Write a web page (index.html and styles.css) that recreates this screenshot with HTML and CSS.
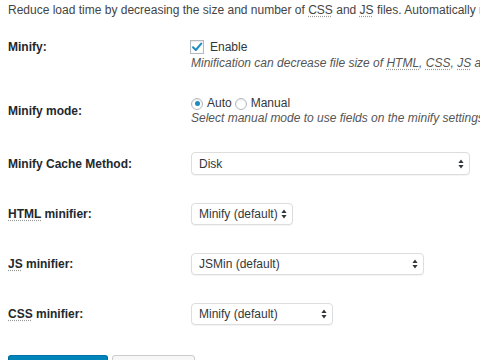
FILE: index.html
```html
<!DOCTYPE html>
<html>
<head>
<meta charset="utf-8">
<link rel="stylesheet" href="styles.css">
</head>
<body>
<div class="page">
  <p class="intro">Reduce load time by decreasing the size and number of <abbr>CSS</abbr> and <abbr>JS</abbr> files. Automatically remove unnecessary data from files.</p>

  <div class="row row-minify">
    <div class="label">Minify:</div>
    <div class="control">
      <div class="line">
        <span class="checkbox"><svg width="12" height="12" viewBox="0 0 12 12"><path d="M2 6.2 L4.8 9 L10.2 2.6" fill="none" stroke="#1e8cbe" stroke-width="2" stroke-linecap="round" stroke-linejoin="round"/></svg></span>
        <span class="opt">Enable</span>
      </div>
      <div class="desc">Minification can decrease file size of <abbr>HTML</abbr>, <abbr>CSS</abbr>, <abbr>JS</abbr> and feeds respectively by ~10% on average.</div>
    </div>
  </div>

  <div class="row row-mode">
    <div class="label">Minify mode:</div>
    <div class="control">
      <div class="line line-tight">
        <span class="radio checked"></span><span class="opt">Auto</span>
        <span class="radio"></span><span class="opt">Manual</span>
      </div>
      <div class="desc desc-tight">Select manual mode to use fields on the minify settings tab to specify files to be minified.</div>
    </div>
  </div>

  <div class="row row-cache">
    <div class="label">Minify Cache Method:</div>
    <div class="control">
      <div class="select sel-cache"><span>Disk</span><svg class="arrows" width="6" height="10" viewBox="0 0 6 10"><path d="M3 0.5 L5.6 4 L0.4 4 Z M3 9.5 L5.6 6 L0.4 6 Z" fill="#32373c"/></svg></div>
    </div>
  </div>

  <div class="row row-sel">
    <div class="label"><abbr>HTML</abbr> minifier:</div>
    <div class="control">
      <div class="select sel-html"><span>Minify (default)</span><svg class="arrows" width="6" height="10" viewBox="0 0 6 10"><path d="M3 0.5 L5.6 4 L0.4 4 Z M3 9.5 L5.6 6 L0.4 6 Z" fill="#32373c"/></svg></div>
    </div>
  </div>

  <div class="row row-sel">
    <div class="label"><abbr>JS</abbr> minifier:</div>
    <div class="control">
      <div class="select sel-js"><span>JSMin (default)</span><svg class="arrows" width="6" height="10" viewBox="0 0 6 10"><path d="M3 0.5 L5.6 4 L0.4 4 Z M3 9.5 L5.6 6 L0.4 6 Z" fill="#32373c"/></svg></div>
    </div>
  </div>

  <div class="row row-sel">
    <div class="label"><abbr>CSS</abbr> minifier:</div>
    <div class="control">
      <div class="select sel-css"><span>Minify (default)</span><svg class="arrows" width="6" height="10" viewBox="0 0 6 10"><path d="M3 0.5 L5.6 4 L0.4 4 Z M3 9.5 L5.6 6 L0.4 6 Z" fill="#32373c"/></svg></div>
    </div>
  </div>

  <div class="buttons">
    <button class="btn btn-primary">Save all settings</button>
    <button class="btn">Empty cache</button>
  </div>
</div>
</body>
</html>
```

FILE: styles.css
```css
html, body {
  margin: 0;
  padding: 0;
  background: #ffffff;
  overflow: hidden;
}
.page {
  padding: 2px 0 0 8px;
  font-family: "Liberation Sans", Arial, sans-serif;
  font-size: 12px;
  color: #32373c;
  white-space: nowrap;
  width: 472px;
  overflow: hidden;
}
abbr {
  text-decoration: underline dotted #999;
  text-underline-offset: 2px;
}
.intro {
  margin: 0;
  line-height: 16px;
  color: #444;
}
.row {
  display: flex;
}
.label {
  width: 183px;
  flex: none;
  font-weight: bold;
  color: #23282d;
  line-height: 16px;
}
.control {
  display: flex;
  flex-direction: column;
}
.row-minify {
  margin-top: 21px;
  align-items: flex-start;
}
.row-mode {
  margin-top: 24px;
  align-items: center;
}
.row-cache {
  margin-top: 26px;
  align-items: center;
}
.row-sel {
  margin-top: 28px;
  align-items: center;
}
.line {
  display: flex;
  align-items: center;
  height: 16px;
  line-height: 16px;
}
.line-tight {
  height: 15px;
  line-height: 15px;
}
.checkbox {
  width: 14px;
  height: 14px;
  box-sizing: border-box;
  border: 1px solid #b4b9be;
  background: #fff;
  box-shadow: inset 0 1px 2px rgba(0,0,0,0.1);
  display: flex;
  align-items: center;
  justify-content: center;
  margin-left: -1px;
  margin-right: 6px;
}
.opt {
  color: #32373c;
}
.radio {
  width: 12px;
  height: 12px;
  box-sizing: border-box;
  border: 1px solid #b4b9be;
  border-radius: 50%;
  background: #fff;
  box-shadow: inset 0 1px 2px rgba(0,0,0,0.1);
  display: flex;
  align-items: center;
  justify-content: center;
  margin-right: 4px;
}
.radio + .opt {
  margin-right: 3px;
}
.radio.checked::before {
  content: "";
  width: 5px;
  height: 5px;
  border-radius: 50%;
  background: #1e8cbe;
}
.desc {
  font-style: italic;
  color: #555;
  line-height: 17px;
}
.desc-tight {
  line-height: 15px;
}
.select {
  box-sizing: border-box;
  height: 22px;
  border: 1px solid #ddd;
  border-radius: 4px;
  box-shadow: 0 1px 1px rgba(0,0,0,0.05);
  background: #fff;
  display: flex;
  align-items: center;
  justify-content: space-between;
  padding: 0 5px 0 7px;
  color: #32373c;
}
.arrows {
  flex: none;
}
.sel-cache { width: 279px; height: 23px; }
.sel-html { width: 102px; }
.sel-js { width: 233px; }
.sel-css { width: 142px; }
.buttons {
  display: flex;
  gap: 4px;
  margin-top: 30px;
}
.btn {
  font-family: "Liberation Sans", Arial, sans-serif;
  font-size: 12px;
  height: 30px;
  padding: 0 10px;
  border-radius: 3px;
  border: 1px solid #ccc;
  background: #f7f7f7;
  color: #555;
  box-shadow: 0 1px 0 #ccc;
  width: 83px;
}
.btn-primary {
  background: #0085ba;
  border-color: #0073aa #006799 #006799;
  color: #fff;
  width: 100px;
  box-shadow: 0 1px 0 #006799;
}
```
